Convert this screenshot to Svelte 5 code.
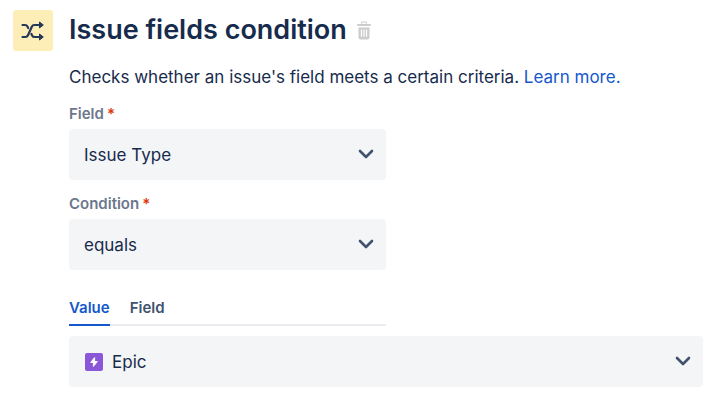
<script>
  const fields = ["Issue Type"]
  const conditions = ["equals"]
  const issueTypes = ["Epic"]
  const tabs = ["Value", "Field"]

  let field = $state("Issue Type")
  let condition = $state("equals")
  let issueType = $state("Epic")
  let activeTab = $state("Value")
</script>

{#snippet chevron()}
  <svg class="chevron" viewBox="0 0 16 10" aria-hidden="true">
    <path d="M2 2l6 6 6-6" />
  </svg>
{/snippet}

<main class="condition">
  <div class="badge">
    <svg viewBox="0 0 24 22" aria-hidden="true">
      <path class="line" d="M1.5 5H4Q5.8 5 6.6 6.8L7.2 8" />
      <path class="line" d="M1.5 17H4.5Q6.2 17 7 15.2L10.8 6.8Q11.6 5 13.4 5H19.5" />
      <path class="line" d="M10.4 14L11.1 15.4Q11.9 17 13.6 17H19.5" />
      <path class="head" d="M18.5 2L22.3 5L18.5 8ZM18.5 14L22.3 17L18.5 20Z" />
    </svg>
  </div>

  <div class="content">
    <header>
      <h1>Issue fields condition</h1>
      <button class="remove" aria-label="Delete condition">
        <svg viewBox="0 0 16 20" aria-hidden="true">
          <path d="M5.6 3.5V2.7Q5.6 2 6.3 2H9.7Q10.4 2 10.4 2.7V3.5" class="handle" />
          <path d="M2 5H14" class="lid" />
          <path fill-rule="evenodd" d="M2.5 7.5H13.5V17.5Q13.5 19.5 11.5 19.5H4.5Q2.5 19.5 2.5 17.5ZM4.9 9.5V16.8H6.1V9.5ZM7.4 9.5V16.8H8.6V9.5ZM9.9 9.5V16.8H11.1V9.5Z" />
        </svg>
      </button>
    </header>

    <p>Checks whether an issue's field meets a certain criteria. <a href="#learn-more">Learn more.</a></p>

    <div class="group half">
      <label for="field">Field<span class="required">*</span></label>
      <div class="select">
        <select id="field" bind:value={field} required>
          {#each fields as option}
            <option>{option}</option>
          {/each}
        </select>
        {@render chevron()}
      </div>
    </div>

    <div class="group half">
      <label for="condition">Condition<span class="required">*</span></label>
      <div class="select">
        <select id="condition" bind:value={condition} required>
          {#each conditions as option}
            <option>{option}</option>
          {/each}
        </select>
        {@render chevron()}
      </div>
    </div>

    <div class="tabs half" role="tablist">
      {#each tabs as tab}
        <button role="tab" class:active={tab === activeTab} aria-selected={tab === activeTab} onclick={() => activeTab = tab}>{tab}</button>
      {/each}
    </div>

    <div class="select with-icon">
      <svg class="epic" viewBox="0 0 18 18" aria-hidden="true">
        <rect width="18" height="18" rx="2" />
        <path d="M9.6 4.6L5.7 9.4H8.4V13.4L12.3 8.6H9.6Z" />
      </svg>
      <select aria-label="Value" bind:value={issueType}>
        {#each issueTypes as option}
          <option>{option}</option>
        {/each}
      </select>
      {@render chevron()}
    </div>
  </div>
</main>

<style>
  :global(body){
    margin: 0;
    background-color: white;
  }
  .condition{
    display: flex;
    gap: 16px;
    padding: 10px 17px 15px 13px;
    color: #172b4d;
    font-family: Inter, "Liberation Sans", sans-serif;
    font-size: 17px;
  }
  .badge{
    display: flex;
    flex: none;
    align-items: center;
    justify-content: center;
    width: 40px;
    height: 41px;
    border-radius: 3px;
    background-color: #fdeeb8;
  }
  .badge svg{
    width: 24px;
    height: 22px;
  }
  .line{
    fill: none;
    stroke: #253858;
    stroke-width: 2.2;
    stroke-linecap: round;
  }
  .head{
    fill: #253858;
    stroke: #253858;
    stroke-linejoin: round;
  }
  .content{
    flex: 1;
    min-width: 0;
  }
  header{
    display: flex;
    align-items: center;
    gap: 9px;
    height: 40px;
  }
  h1{
    margin: 0;
    font-size: 27px;
    font-weight: 600;
    line-height: 40px;
  }
  button{
    padding: 0;
    border: none;
    background-color: transparent;
    font: inherit;
    cursor: pointer;
  }
  .remove svg{
    display: block;
    width: 16px;
    height: 20px;
    fill: #cccccc;
  }
  .handle,
  .lid{
    fill: none;
    stroke: #cccccc;
    stroke-width: 1.2;
  }
  .lid{
    stroke-width: 2;
    stroke-linecap: round;
  }
  p{
    margin: 15px 0 13px;
    line-height: 24px;
  }
  a{
    color: #1558cc;
    text-decoration: none;
  }
  .half{
    width: 50%;
  }
  .group{
    margin-bottom: 12px;
  }
  label{
    display: block;
    padding-bottom: 3px;
    color: #6b778c;
    font-size: 15px;
    font-weight: 600;
    line-height: 24px;
  }
  .required{
    padding-left: 3px;
    color: #de350b;
  }
  .select{
    position: relative;
  }
  select{
    display: block;
    width: 100%;
    height: 51px;
    padding: 0 48px 0 15px;
    border: none;
    border-radius: 4px;
    appearance: none;
    background-color: #f4f5f7;
    color: #172b4d;
    font: inherit;
  }
  .with-icon select{
    padding-left: 43px;
  }
  .chevron{
    position: absolute;
    top: 20px;
    right: 12px;
    width: 16px;
    height: 10px;
    fill: none;
    stroke: #42526e;
    stroke-width: 2.6;
    stroke-linecap: round;
    stroke-linejoin: round;
    pointer-events: none;
  }
  .epic{
    position: absolute;
    top: 17px;
    left: 16px;
    width: 18px;
    height: 18px;
    pointer-events: none;
  }
  .epic rect{
    fill: #8b57d9;
  }
  .epic path{
    fill: white;
    stroke: white;
    stroke-linejoin: round;
  }
  .tabs{
    display: flex;
    gap: 20px;
    margin: 24px 0 10px;
    box-shadow: inset 0 -2px #ebecf0;
  }
  .tabs button{
    padding-bottom: 2px;
    border-bottom: 2px solid transparent;
    color: #42526e;
    font-size: 15px;
    font-weight: 600;
    line-height: 28px;
  }
  .tabs .active{
    border-color: #1558cc;
    color: #1558cc;
  }
</style>
